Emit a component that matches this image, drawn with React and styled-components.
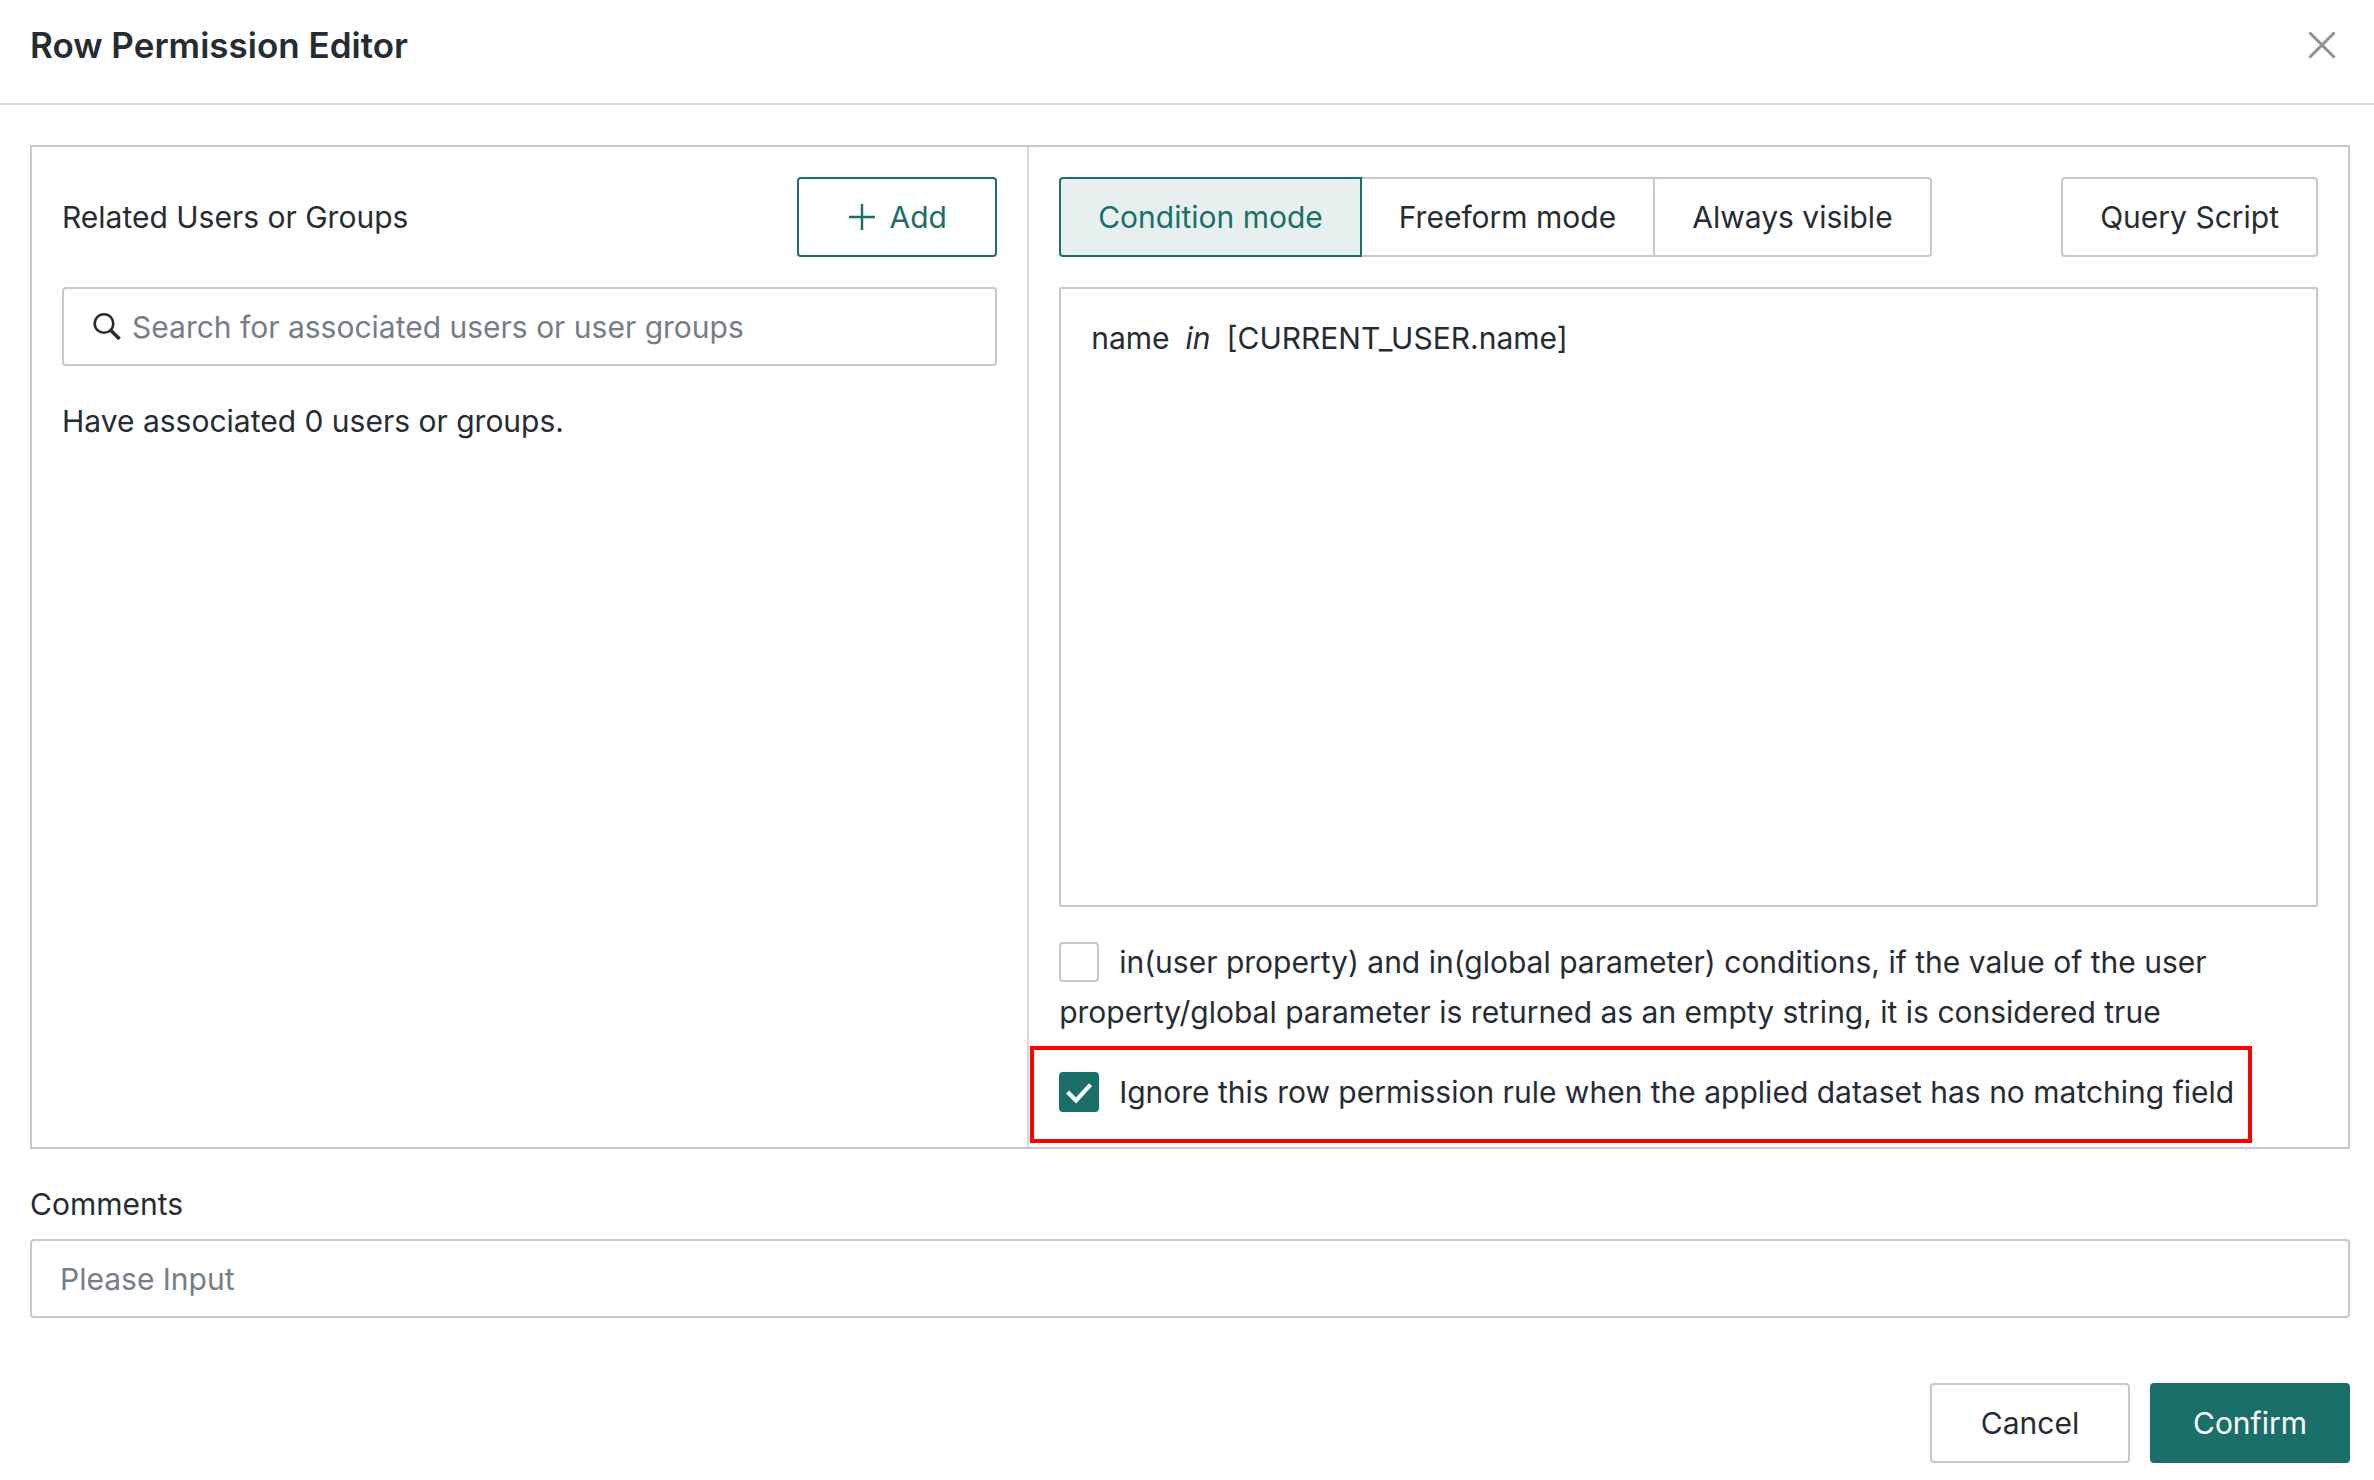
import React, { useState } from 'react';
import styled, { createGlobalStyle, css } from 'styled-components';

const color = {
  text: '#262c33',
  muted: '#767d89',
  border: '#c3c8d2',
  divider: '#d7dae2',
  primary: '#1a7069',
  primarySoft: '#e8f0ef',
  highlight: '#ff0000',
};

const GlobalStyle = createGlobalStyle`
  *, *::before, *::after { box-sizing: border-box; }
  body {
    margin: 0;
    background: #ffffff;
    color: ${color.text};
    font-family: Inter, "Liberation Sans", sans-serif;
    font-size: 30px;
    line-height: 50px;
  }
  button, input { font: inherit; color: inherit; }
`;

const Dialog = styled.main`
  display: flex;
  flex-direction: column;
`;

const Header = styled.header`
  display: flex;
  align-items: center;
  justify-content: space-between;
  padding: 20px 34px 33px 30px;
  border-bottom: 2px solid ${color.divider};
`;

const Title = styled.h1`
  margin: 0;
  font-size: 35px;
  font-weight: 600;
  line-height: 50px;
`;

const CloseButton = styled.button`
  display: flex;
  padding: 4px;
  border: 0;
  background: none;
  color: #8f9092;
  cursor: pointer;
`;

const Body = styled.div`
  padding: 40px 24px 0 30px;
`;

const Panes = styled.div`
  display: grid;
  grid-template-columns: 31fr 41fr;
  border: 2px solid ${color.border};
`;

const Pane = styled.section`
  display: flex;
  flex-direction: column;
  gap: 30px;
  min-width: 0;
  padding: 30px;
  ${(p) => p.$divided && css`border-right: 2px solid ${color.divider};`}
`;

const PaneBar = styled.div`
  display: flex;
  align-items: center;
  justify-content: space-between;
`;

const PaneTitle = styled.h2`
  margin: 0;
  font-size: 30px;
  font-weight: 400;
`;

const tones = {
  plain: css`border-color: ${color.border}; background: #ffffff; color: ${color.text};`,
  outline: css`border-color: ${color.primary}; background: #ffffff; color: ${color.primary};`,
  solid: css`border-color: ${color.primary}; background: ${color.primary}; color: #ffffff;`,
};

const Button = styled.button`
  display: flex;
  align-items: center;
  justify-content: center;
  gap: 12px;
  min-width: 200px;
  height: 80px;
  padding: 0 37px;
  border: 2px solid;
  border-radius: 4px;
  cursor: pointer;
  ${(p) => tones[p.$tone || 'plain']}
`;

const ModeGroup = styled.div`
  display: flex;
`;

const ModeButton = styled.button`
  height: 80px;
  padding: 0 37px;
  border: 2px solid ${color.border};
  background: #ffffff;
  cursor: pointer;

  &:first-child { border-radius: 4px 0 0 4px; }
  &:last-child { border-radius: 0 4px 4px 0; }
  & + & { margin-left: -2px; }

  &[aria-pressed='true'] {
    z-index: 1;
    border-color: ${color.primary};
    background: ${color.primarySoft};
    color: ${color.primary};
  }
`;

const Field = styled.div`
  display: flex;
  align-items: center;
  gap: 10px;
  height: 79px;
  padding: 0 28px;
  border: 2px solid ${color.border};
  border-radius: 4px;
`;

const TextInput = styled.input`
  flex: 1;
  min-width: 0;
  padding: 0;
  border: 0;
  outline: 0;
  background: none;

  &::placeholder { color: ${color.muted}; opacity: 1; }
`;

const Summary = styled.p`
  margin: 0;
`;

const Conditions = styled.div`
  display: flex;
  align-items: flex-start;
  gap: 16px;
  min-height: 620px;
  padding: 24px 30px;
  border: 2px solid ${color.border};
  border-radius: 2px;
`;

const Options = styled.div`
  display: flex;
  flex-direction: column;
  align-items: flex-start;
  gap: 30px;
`;

const Option = styled.div`
  position: relative;
`;

const Highlight = styled.div`
  position: absolute;
  inset: -21px -18px -26px -29px;
  border: 4px solid ${color.highlight};
  pointer-events: none;
`;

const CheckWrap = styled.span`
  display: inline-grid;
  width: 40px;
  height: 40px;
  margin: 5px 20px 5px 0;
  vertical-align: top;

  & > * { grid-area: 1 / 1; }
  svg { place-self: center; pointer-events: none; }
`;

const CheckInput = styled.input`
  appearance: none;
  width: 40px;
  height: 40px;
  margin: 0;
  border: 2px solid ${color.border};
  border-radius: 4px;
  background: #ffffff;
  cursor: pointer;

  &:checked { border-color: ${color.primary}; background: ${color.primary}; }
`;

const CommentBlock = styled.div`
  display: flex;
  flex-direction: column;
  gap: 10px;
  padding-top: 30px;
`;

const Footer = styled.footer`
  display: flex;
  justify-content: flex-end;
  gap: 20px;
  padding: 65px 24px 17px;
`;

const CloseIcon = () => (
  <svg width="28" height="28" viewBox="0 0 28 28" fill="none" stroke="currentColor" strokeWidth="3" aria-hidden="true">
    <path d="M1.5 1.5 26.5 26.5M26.5 1.5 1.5 26.5" />
  </svg>
);

const PlusIcon = () => (
  <svg width="30" height="30" viewBox="0 0 30 30" fill="none" stroke="currentColor" strokeWidth="2.4" aria-hidden="true">
    <path d="M15 2V28M2 15H28" />
  </svg>
);

const SearchIcon = () => (
  <svg width="30" height="30" viewBox="0 0 30 30" fill="none" stroke={color.text} aria-hidden="true">
    <circle cx="12" cy="11.5" r="9.3" strokeWidth="2.6" />
    <path d="M18 17.5 27.5 27" strokeWidth="3.6" />
  </svg>
);

const CheckIcon = () => (
  <svg width="28" height="28" viewBox="0 0 28 28" fill="none" stroke="#ffffff" strokeWidth="4.2" aria-hidden="true">
    <path d="M2.6 14 11 22.4 25.6 6.6" />
  </svg>
);

function CheckOption({ id, label, defaultChecked, highlighted }) {
  const [checked, setChecked] = useState(Boolean(defaultChecked));
  return (
    <Option>
      <CheckWrap>
        <CheckInput id={id} type="checkbox" checked={checked} onChange={(e) => setChecked(e.target.checked)} />
        {checked && <CheckIcon />}
      </CheckWrap>
      <label htmlFor={id}>{label}</label>
      {highlighted && <Highlight />}
    </Option>
  );
}

const modes = ['Condition mode', 'Freeform mode', 'Always visible'];

export default function App() {
  const [mode, setMode] = useState(modes[0]);
  return (
    <>
      <GlobalStyle />
      <Dialog>
        <Header>
          <Title>Row Permission Editor</Title>
          <CloseButton type="button" aria-label="Close"><CloseIcon /></CloseButton>
        </Header>
        <Body>
          <Panes>
            <Pane $divided>
              <PaneBar>
                <PaneTitle>Related Users or Groups</PaneTitle>
                <Button type="button" $tone="outline"><PlusIcon />Add</Button>
              </PaneBar>
              <Field>
                <SearchIcon />
                <TextInput
                  type="text"
                  aria-label="Search for associated users or user groups"
                  placeholder="Search for associated users or user groups"
                />
              </Field>
              <Summary>Have associated 0 users or groups.</Summary>
            </Pane>
            <Pane>
              <PaneBar>
                <ModeGroup role="group" aria-label="Rule mode">
                  {modes.map((name) => (
                    <ModeButton key={name} type="button" aria-pressed={name === mode} onClick={() => setMode(name)}>
                      {name}
                    </ModeButton>
                  ))}
                </ModeGroup>
                <Button type="button">Query Script</Button>
              </PaneBar>
              <Conditions>
                <span>name</span>
                <em>in</em>
                <span>[CURRENT_USER.name]</span>
              </Conditions>
              <Options>
                <CheckOption
                  id="empty-is-true"
                  label="in(user property) and in(global parameter) conditions, if the value of the user property/global parameter is returned as an empty string, it is considered true"
                />
                <CheckOption
                  id="ignore-unmatched"
                  label="Ignore this row permission rule when the applied dataset has no matching field"
                  defaultChecked
                  highlighted
                />
              </Options>
            </Pane>
          </Panes>
          <CommentBlock>
            <label htmlFor="comments">Comments</label>
            <Field>
              <TextInput id="comments" type="text" placeholder="Please Input" />
            </Field>
          </CommentBlock>
        </Body>
        <Footer>
          <Button type="button">Cancel</Button>
          <Button type="button" $tone="solid">Confirm</Button>
        </Footer>
      </Dialog>
    </>
  );
}
